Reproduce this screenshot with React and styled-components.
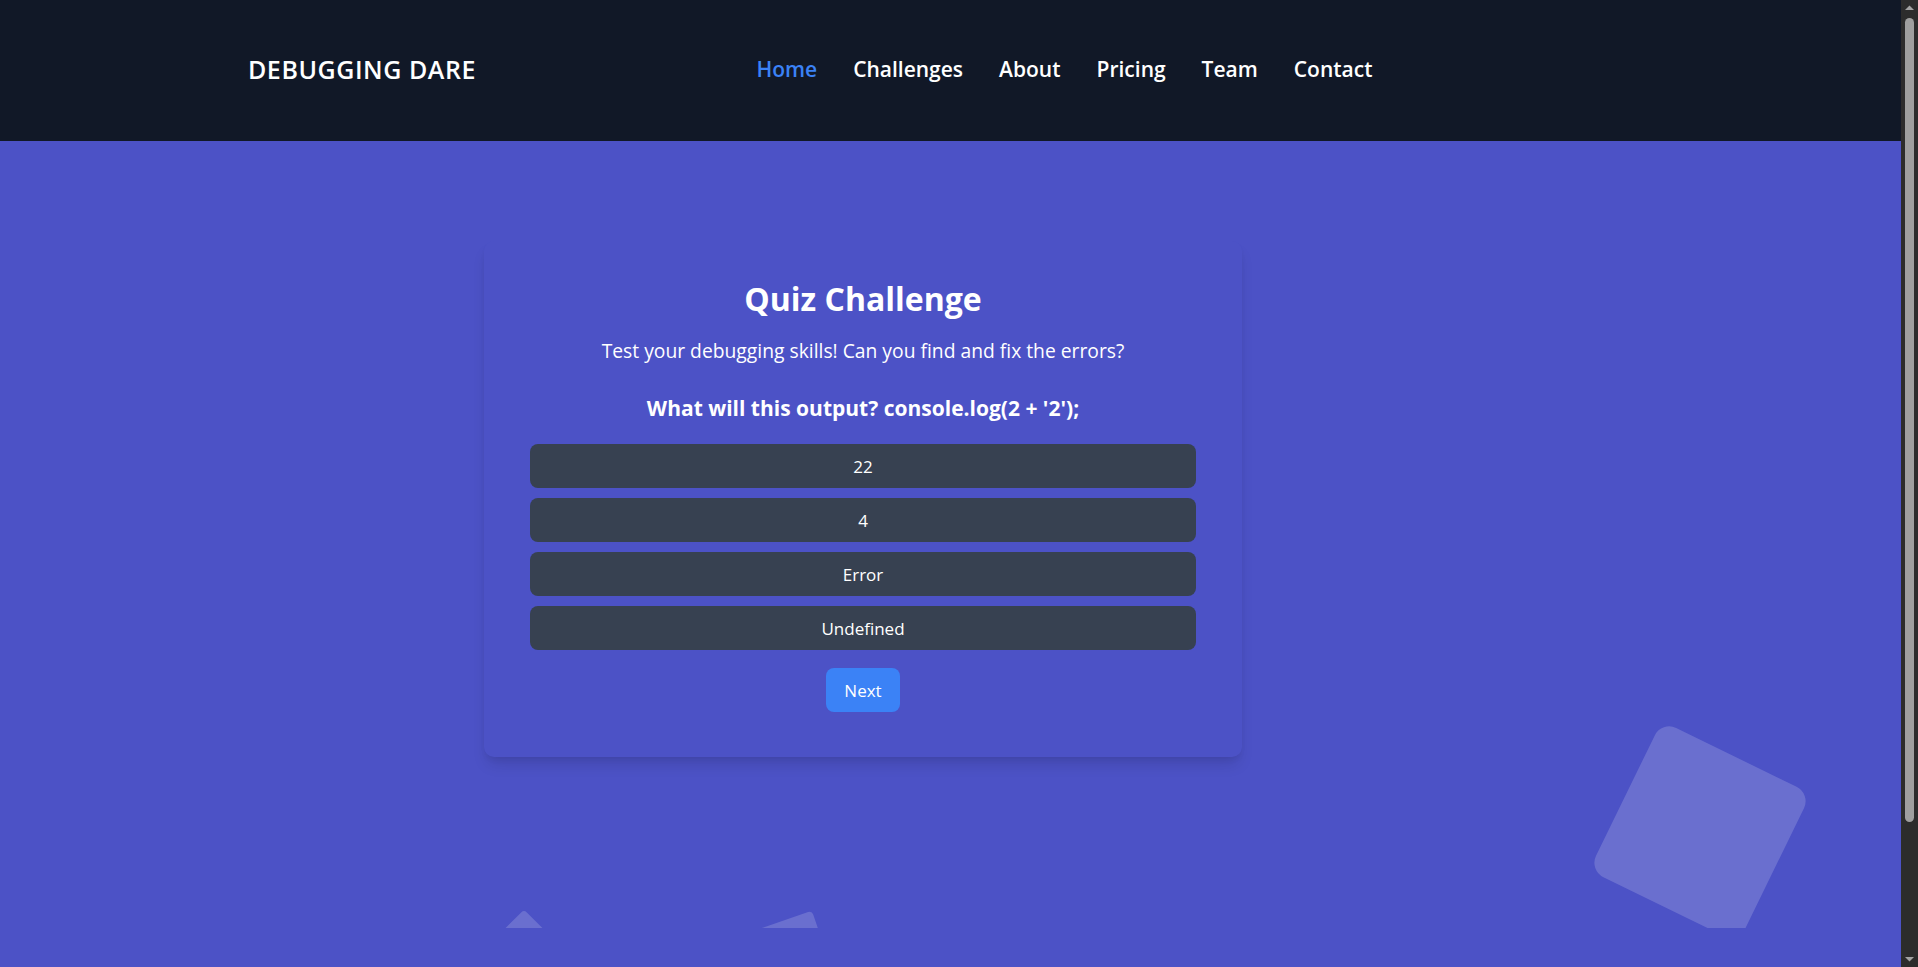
import React from 'react'
import styled, { createGlobalStyle } from 'styled-components'

const GlobalStyle = createGlobalStyle`
  * { box-sizing: border-box; }
  body {
    margin: 0;
    background: #4c52c6;
    font-family: "Open Sans", "Noto Sans", sans-serif;
    color: white;
  }
`

const options = ['22', '4', 'Error', 'Undefined']
const links = ['Home', 'Challenges', 'About', 'Pricing', 'Team', 'Contact']

const App = () => {
  return (
    <>
      <GlobalStyle />
      <Page>
        <Header>
          <div className='inner'>
            <Logo>DEBUGGING DARE</Logo>
            <Nav>
              {links.map((l, i) => (
                <NavLink key={l} $active={i === 0}>{l}</NavLink>
              ))}
            </Nav>
            <span />
          </div>
        </Header>
        <Hero>
          <Card>
            <Title>Quiz Challenge</Title>
            <Sub>Test your debugging skills! Can you find and fix the errors?</Sub>
            <Question>What will this output? console.log(2 + '2');</Question>
            <Options>
              {options.map((o) => (
                <Option key={o}>{o}</Option>
              ))}
            </Options>
            <NextButton>Next</NextButton>
          </Card>
          <Shape $size={166} $top={749} $left={1617} $rot={26} $radius={16} />
          <Shape $size={60} $top={922} $left={494} $rot={45} $radius={4} />
          <Shape $size={90} $top={923} $left={739} $rot={-19} $radius={4} />
        </Hero>
        <Below />
      </Page>
      <ScrollBar>
        <svg width="17" height="17" viewBox="0 0 17 17">
          <path d="M4 10 L8.5 5.5 L13 10 Z" fill="#a3a3a3" />
        </svg>
        <div className='thumb' />
        <svg width="17" height="17" viewBox="0 0 17 17" className='down'>
          <path d="M4 7 L8.5 11.5 L13 7 Z" fill="#a3a3a3" />
        </svg>
      </ScrollBar>
    </>
  )
}

export default App

const Page = styled.div`
  width: 1901px;
`

const Header = styled.header`
  background: #111827;
  height: 141px;
  .inner {
    max-width: 1405px;
    margin: 0 auto;
    height: 100%;
    display: flex;
    align-items: center;
    justify-content: space-between;
    padding-bottom: 4px;
  }
`

const Logo = styled.h1`
  margin: 0;
  font-size: 25px;
  font-weight: 600;
  letter-spacing: 0.55px;
`

const Nav = styled.nav`
  display: flex;
  align-items: center;
  gap: 36px;
`

const NavLink = styled.a`
  font-size: 21px;
  font-weight: 600;
  color: ${(p) => (p.$active ? '#3b82f6' : '#ffffff')};
  cursor: pointer;
`

const Hero = styled.section`
  position: relative;
  overflow: hidden;
  height: 787px;
  padding-top: 100px;
  padding-left: 484px;
`

const Card = styled.div`
  width: 758px;
  padding: 40px 46px 45px;
  border-radius: 10px;
  background: #4c52c6;
  box-shadow: 0 10px 15px -3px rgba(0, 0, 0, 0.12), 0 4px 6px -2px rgba(0, 0, 0, 0.06);
  display: flex;
  flex-direction: column;
  align-items: center;
  position: relative;
  z-index: 1;
`

const Title = styled.h2`
  margin: 0;
  font-size: 32px;
  line-height: 36px;
  font-weight: 700;
`

const Sub = styled.p`
  margin: 20px 0 0;
  font-size: 19.3px;
  line-height: 28px;
`

const Question = styled.h3`
  margin: 29px 0 0;
  font-size: 21px;
  line-height: 28px;
  font-weight: 700;
`

const Options = styled.div`
  margin-top: 22px;
  width: 100%;
  display: flex;
  flex-direction: column;
  gap: 10px;
`

const Option = styled.button`
  height: 44px;
  border: none;
  border-radius: 8px;
  background: #374151;
  color: white;
  font-family: inherit;
  font-size: 17px;
  cursor: pointer;
`

const NextButton = styled.button`
  margin-top: 18px;
  width: 74px;
  height: 44px;
  border: none;
  border-radius: 8px;
  background: #3b82f6;
  color: white;
  font-family: inherit;
  font-size: 17px;
  cursor: pointer;
`

const Shape = styled.div`
  position: absolute;
  top: ${(p) => p.$top - 141}px;
  left: ${(p) => p.$left}px;
  width: ${(p) => p.$size}px;
  height: ${(p) => p.$size}px;
  border-radius: ${(p) => p.$radius}px;
  background: rgba(255, 255, 255, 0.17);
  transform: rotate(${(p) => p.$rot}deg);
`

const Below = styled.section`
  height: 194px;
`

const ScrollBar = styled.div`
  position: fixed;
  top: 0;
  right: 0;
  width: 17px;
  height: 100vh;
  background: #2c2c2c;
  display: flex;
  flex-direction: column;
  svg { flex-shrink: 0; display: block; }
  .down { margin-top: auto; }
  .thumb {
    margin: 1px 0 0 4px;
    width: 9px;
    height: 804px;
    border-radius: 5px;
    background: #9f9f9f;
  }
`
